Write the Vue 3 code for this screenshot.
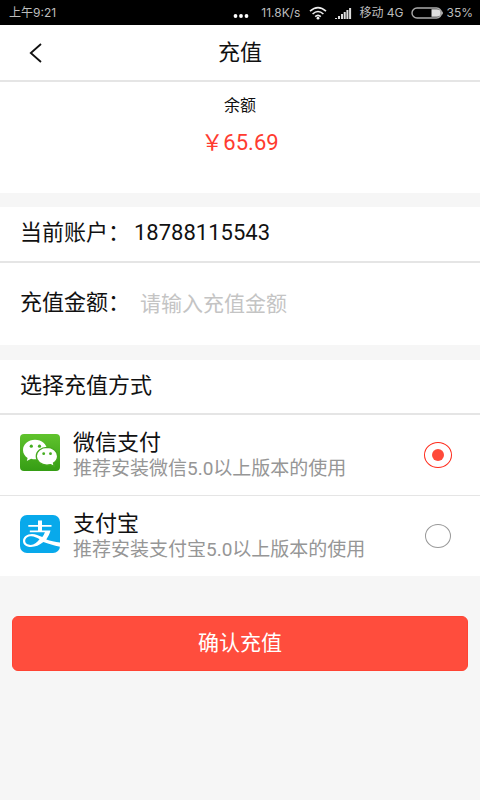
<script setup>
import { ref } from 'vue'

const amount = ref('')
const method = ref('wechat')
const methods = [
  { id: 'wechat', name: '微信支付', note: '推荐安装微信5.0以上版本的使用' },
  { id: 'alipay', name: '支付宝', note: '推荐安装支付宝5.0以上版本的使用' },
]
</script>

<template>
  <div class="page">
    <div class="status">
      <span class="clock">上午9:21</span>
      <svg class="dots" width="16" height="6" viewBox="0 0 16 6">
        <circle cx="2.5" cy="3" r="1.9" /><circle cx="8" cy="3" r="1.9" /><circle cx="13.5" cy="3" r="1.9" />
      </svg>
      <span class="speed">11.8K/s</span>
      <svg class="wifi" width="18" height="14" viewBox="0 0 18 14">
        <path d="M1 5.200Q9-2 17 5.200M3.600 8Q9 3 14.400 8M6.200 10.600Q9 8 11.800 10.600" />
        <circle cx="9" cy="12.200" r="1.400" />
      </svg>
      <svg class="signal" width="18" height="12" viewBox="0 0 18 12">
        <path d="M1 11h2v1H1zM4 9h2v3H4zM7 7h2v5H7zM9.700 5h2v7h-2zM12.400 3h2v9h-2zM15.100 1h2v11h-2z" />
      </svg>
      <span class="carrier">移动 4G</span>
      <svg class="battery" width="33" height="12" viewBox="0 0 33 12">
        <rect class="shell" x="1" y="1" width="29.500" height="10" rx="5" />
        <path class="charge" d="M20.500 2.200h5.500a3.800 3.800 0 0 1 0 7.600h-5.500z" />
        <path class="charge" d="M31 4q1.800 2 0 4z" />
      </svg>
      <span>35%</span>
    </div>

    <header class="header">
      <button class="back" type="button" aria-label="返回">
        <svg width="14" height="20" viewBox="0 0 14 20"><path d="M12 1 1.800 10 12 19" /></svg>
      </button>
      <h1 class="title">充值</h1>
    </header>

    <section class="balance">
      <p class="balance-label">余额</p>
      <p class="balance-value">￥65.69</p>
    </section>

    <form class="form" @submit.prevent>
      <section class="panel">
        <div class="row account">
          <span class="label">当前账户：</span>
          <span>18788115543</span>
        </div>
        <div class="row amount">
          <label class="label" for="amount">充值金额：</label>
          <input id="amount" v-model="amount" class="field" type="text" inputmode="decimal" placeholder="请输入充值金额">
        </div>
      </section>

      <section class="panel methods">
        <h2 class="row heading">选择充值方式</h2>
        <label v-for="item in methods" :key="item.id" class="row method" :for="item.id">
          <svg v-if="item.id === 'wechat'" class="logo" width="40" height="38" viewBox="0 0 40 38">
            <defs>
              <linearGradient id="green" x1="0" y1="0" x2="0" y2="1">
                <stop offset="0" stop-color="#60c32d" /><stop offset="1" stop-color="#359d14" />
              </linearGradient>
            </defs>
            <rect width="40" height="37" rx="4" fill="url(#green)" />
            <path fill="#fff" d="M15 5.700C8.200 5.700 3 10.200 3 15.900c0 3.300 1.800 6.200 4.600 8L6.800 26.900l4.300-2.200c1.300.4 2.500.6 3.900.6 6.800 0 12-4.100 12-9.400C27 10.200 21.800 5.700 15 5.700z" />
            <path fill="#fff" stroke="#45a91d" stroke-width="1.300" d="M27 13.400c-6 0-10.700 3.900-10.700 8.800s4.700 8.900 10.700 8.900c1.300 0 2.500-.2 3.600-.5l3.600 1.700-.7-3.200c2.400-1.600 4.100-4 4.100-6.900 0-4.900-4.700-8.800-10.600-8.800z" />
            <g fill="#45ad20">
              <circle cx="11.300" cy="12.200" r="1.600" /><circle cx="19.500" cy="12.200" r="1.600" />
              <circle cx="23.700" cy="19.700" r="1.400" /><circle cx="30.500" cy="19.700" r="1.400" />
            </g>
          </svg>
          <svg v-else class="logo" width="40" height="38" viewBox="0 0 40 38">
            <rect width="40" height="38" rx="7" fill="#08a9eb" />
            <path fill="#fff" d="M18 5.500h4V10h9.500v1.800H22v3.700h8.500c-.9 3.300-2.300 6.300-4.200 8.900 3.900 1.400 8.700 2.300 13.700 3v4.400c-6.200-1.200-11.800-2.800-16.600-4.700C19.600 30.300 15.300 32 11 32c-5 0-8-2.400-8-6 0-4 3.700-7 9-7 3.600 0 6.700 1.400 10.300 3.100 1.200-1.500 2.100-3.100 2.600-4.800H9.800v-1.800H18v-3.700H8.300V10H18zM19.500 24.300c-2.900-1.800-5.300-3.100-8.200-3.100-3.500 0-6.100 1.900-6.100 4.600 0 2.500 2.200 4.100 5.500 4.100 3.400 0 6.300-2.300 8.800-5.600z" />
          </svg>
          <span class="texts">
            <span class="name">{{ item.name }}</span>
            <span class="note">{{ item.note }}</span>
          </span>
          <input :id="item.id" v-model="method" class="radio" type="radio" name="method" :value="item.id">
        </label>
      </section>

      <button class="submit" type="submit">确认充值</button>
    </form>
  </div>
</template>

<style>
body {
  margin: 0;
  background: #f6f6f6;
}
</style>

<style scoped>
.page {
  min-height: 100vh;
  background: #f6f6f6;
  color: #111;
  font-family: Roboto, "Noto Sans CJK SC", sans-serif;
  font-size: 22px;
  line-height: 32px;
}

.status {
  display: flex;
  align-items: center;
  height: 25px;
  padding: 0 7px 0 9px;
  background: #000;
  color: #bdbdbd;
  font-family: Inter, "Noto Sans CJK SC", sans-serif;
  font-size: 12px;
  line-height: 24px;
  white-space: nowrap;
}

.clock {
  margin-right: auto;
}

.dots {
  align-self: flex-end;
  margin: 0 12px 6px 0;
  fill: #fff;
}

.speed {
  margin-right: 9px;
}

.wifi {
  margin-right: 7px;
  fill: #eee;
}

.wifi path {
  fill: none;
  stroke: #eee;
  stroke-width: 1.6;
}

.signal {
  margin-right: 7px;
  fill: #ddd;
}

.carrier {
  margin-right: 7px;
}

.battery {
  margin-right: 3px;
}

.shell {
  fill: none;
  stroke: #aaa;
  stroke-width: 1.4;
}

.charge {
  fill: #ddd;
}

.header {
  display: grid;
  grid-template-columns: 72px 1fr 72px;
  align-items: center;
  height: 55px;
  border-bottom: 2px solid #e5e5e5;
  background: #fff;
}

.back {
  display: flex;
  justify-content: center;
  padding: 8px;
  border: 0;
  background: none;
}

.back path {
  fill: none;
  stroke: #111;
  stroke-width: 1.8;
}

.title {
  margin: 0;
  font-size: 22px;
  font-weight: 400;
  text-align: center;
}

.balance {
  padding: 12px 0 34px;
  background: #fff;
  text-align: center;
}

.balance p {
  margin: 0;
}

.balance-label {
  font-size: 16px;
  line-height: 24px;
}

.balance-value {
  padding-top: 9px;
  color: #ff3b30;
}

.form {
  display: flex;
  flex-direction: column;
}

.panel {
  margin-top: 14px;
  background: #fff;
}

.row {
  display: flex;
  align-items: center;
  margin: 0;
  padding: 0 20px;
  font-weight: 400;
}

.row + .row {
  border-top: 2px solid #e5e5e5;
}

.account {
  height: 52px;
  padding-bottom: 2px;
}

.amount {
  height: 80px;
  padding-bottom: 2px;
}

.label {
  flex: none;
  width: 114px;
}

.field {
  flex: 1;
  min-width: 0;
  height: 40px;
  padding: 2px 6px 0;
  border: 0;
  outline: 0;
  background: none;
  color: #111;
  font: inherit;
  font-size: 21px;
}

.field::placeholder {
  color: #c4c4c4;
  opacity: 1;
}

.methods {
  margin-top: 15px;
}

.heading {
  height: 51px;
  padding-bottom: 2px;
  font-size: 22px;
}

.method {
  height: 80px;
}

.method + .row.method {
  border-top-width: 1px;
}

.logo {
  flex: none;
  align-self: flex-start;
  margin: 19px 13px 0 0;
}

.texts {
  display: flex;
  flex: 1;
  flex-direction: column;
  min-width: 0;
}

.name {
  line-height: 28px;
}

.note {
  color: #969696;
  font-size: 19px;
  line-height: 24px;
}

.radio {
  display: grid;
  flex: none;
  place-content: center;
  width: 26px;
  height: 24px;
  margin: 0 9px;
  border: 1px solid #999;
  border-radius: 50%;
  appearance: none;
}

.radio:checked {
  width: 28px;
  height: 26px;
  margin: 0 8px;
  border: 1px solid #ff2a1a;
}

.radio:checked::before {
  width: 12px;
  height: 12px;
  border-radius: 50%;
  background: #ff4a3a;
  content: "";
}

.submit {
  height: 55px;
  margin: 40px 12px;
  padding: 0 0 2px;
  border: 1px solid #ff4433;
  border-radius: 6px;
  background: #ff4d3d;
  color: #fff;
  font: inherit;
  font-size: 21px;
}
</style>
